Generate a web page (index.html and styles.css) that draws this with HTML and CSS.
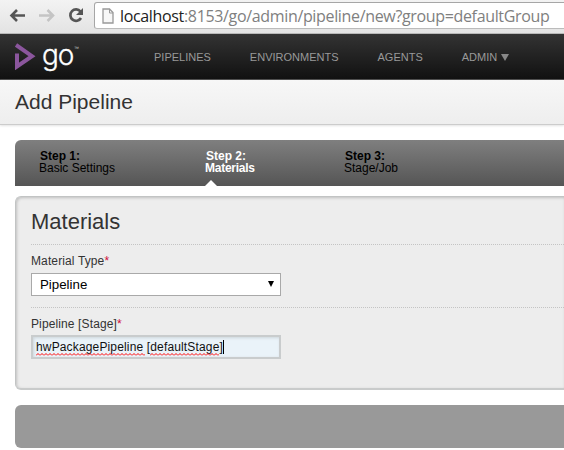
FILE: index.html
```
<!DOCTYPE html>
<html lang="en">
<head>
<meta charset="utf-8">
<title>Add Pipeline</title>
<link rel="stylesheet" href="styles.css">
</head>
<body>
<div class="toolbar">
  <svg class="controls" width="94" height="33" viewBox="0 0 94 33" fill="none">
    <path d="M25 15.500H12M17 10l-5.500 5.500 5.500 5.500" stroke="#555" stroke-width="2.600"/>
    <path d="M39 15.500H52M47.500 10l5.500 5.500-5.500 5.500" stroke="#c4c4c4" stroke-width="2.600"/>
    <path d="M80.500 11.500A5.700 5.700 0 1 0 81 18" stroke="#555" stroke-width="2.700"/>
    <path d="M83 8v7h-7z" fill="#555"/>
  </svg>
  <div class="address">
    <svg width="12" height="16" viewBox="0 0 12 16"><path d="M1 1h6.500L11 4.500V15H1z" fill="#f7f7f7" stroke="#999" stroke-width="1.300"/><path d="M7.500 1v4H11" fill="none" stroke="#999"/></svg>
    <span class="url"><b>localhost</b>:8153/go/admin/pipeline/new?group=defaultGroup</span>
  </div>
</div>
<header class="header">
  <svg class="mark" width="21" height="27" viewBox="0 0 21 27" fill="none" stroke="#8b569d" stroke-width="4"><path d="M1 2L17 13.200 2 23.500V10.500"/></svg>
  <span class="brand">go</span><span class="tm">™</span>
  <nav class="nav">
    <a>PIPELINES</a><a>ENVIRONMENTS</a><a>AGENTS</a><a>ADMIN<i class="caret"></i></a>
  </nav>
</header>
<div class="title"><h1>Add Pipeline</h1></div>
<main>
  <ol class="steps">
    <li class="s1"><b>Step 1:</b><span>Basic Settings</span></li>
    <li class="s2 current"><b>Step 2:</b><span>Materials</span></li>
    <li class="s3"><b>Step 3:</b><span>Stage/Job</span></li>
  </ol>
  <section class="panel">
    <h2>Materials</h2>
    <div class="row first">
      <label>Material Type<em>*</em></label>
      <div class="select"><span>Pipeline</span><svg width="6" height="6" viewBox="0 0 6 6"><path d="M0 0h6L3 6z"/></svg></div>
    </div>
    <div class="row">
      <label>Pipeline [Stage]<em>*</em></label>
      <div class="input"><span class="misspelt">hwPackagePipeline<svg height="3" width="109"><defs><pattern id="wave" width="4" height="3" patternUnits="userSpaceOnUse"><path d="M0 2.500L2 .5L4 2.500" fill="none" stroke="#f00" stroke-width="1"/></pattern></defs><rect width="109" height="3" fill="url(#wave)"/></svg></span>&nbsp;[<span class="misspelt">defaultStage<svg height="3" width="69"><rect width="69" height="3" fill="url(#wave)"/></svg></span>]<i class="cursor"></i></div>
    </div>
  </section>
  <div class="actions"></div>
</main>
</body>
</html>
```
FILE: styles.css
```
* { box-sizing: border-box; }
body { margin: 0; width: 564px; height: 450px; overflow: hidden; background: #fff; color: #333; font: 12px "Liberation Sans", Arial, sans-serif; }
.toolbar { height: 34px; display: flex; background: linear-gradient(#f3f3f3, #e3e3e3); border-bottom: 1px solid #b8b8b8; overflow: hidden; }
.controls { flex: none; }
.address { flex: none; width: 480px; height: 27px; margin-top: 2px; display: flex; align-items: center; padding-left: 7px; background: #fff; border: 1px solid #a6a6a6; border-bottom-color: #bbb; border-radius: 3px; white-space: nowrap; }
.address svg { flex: none; }
.url { margin-left: 6px; font: 16px/24px "Open Sans", sans-serif; letter-spacing: -.34px; color: #808080; }
.url b { font-weight: 400; color: #222; }
.header { height: 46px; display: flex; background: linear-gradient(#333, #111); border-bottom: 1px solid #444; white-space: nowrap; }
.mark { margin: 9px 0 0 15px; flex: none; }
.brand { width: 33px; margin: 3px 0 0 6px; font: 300 28px/36px Inter, sans-serif; letter-spacing: -1px; color: #fff; -webkit-text-stroke: .3px #fff; }
.tm { width: 6px; margin: 11px 0 0 -1px; font-size: 5px; line-height: 6px; color: #ccc; }
.nav { display: flex; margin-left: 74px; font-size: 11px; line-height: 47px; color: #999; gap: 39px; }
.nav a { display: flex; align-items: center; padding-top: 1px; }
.caret { margin-left: 4px; border: 4px solid transparent; border-top: 7px solid #888; border-bottom: 0; }
.title { height: 45px; padding: 9px 15px; background: linear-gradient(#f7f7f7, #eee); border-bottom: 1px solid #ccc; box-shadow: 0 1px 2px #e4e4e4; }
h1 { margin: 0; font-size: 21px; line-height: 26px; font-weight: 400; }
main { padding: 15px 0 0 15px; }
.steps { margin: 0; padding: 9px 0 0 24px; height: 46px; display: flex; list-style: none; background: linear-gradient(#7f7f7f, #555); border-radius: 6px 0 0 0; color: #000; line-height: 12px; }
.steps li { position: relative; }
.steps b, .steps span { display: block; line-height: 12px; }
.steps b { padding: 1px 0 0 1px; }
.s1 { width: 166px; }
.s2 { width: 139px; }
.current { color: #fff; }
.current span { font-weight: 700; letter-spacing: -.25px; }
.current::after { content: ""; position: absolute; left: 0; bottom: 0; border: 6px solid transparent; border-bottom-color: #fff; border-top: 0; }
.panel { height: 194px; margin-top: 10px; padding: 10px 0 0 15px; background: #ededed; border: 1px solid #c2c4c4; border-bottom: 2px solid #c9cbcb; border-right: 0; border-radius: 6px 0 0 6px; box-shadow: inset 1px 1px 3px #c0c0c0; }
h2 { margin: 0; height: 37px; font-size: 22px; line-height: 30px; font-weight: 400; }
.row { border-top: 1px dotted #c4c4c4; padding-top: 9px; height: 63px; }
.row label { display: block; line-height: 14px; letter-spacing: .12px; }
em { color: #d0103a; font-style: normal; }
.select { width: 250px; height: 23px; margin-top: 5px; display: flex; align-items: center; justify-content: space-between; padding: 0 6px 0 8px; background: #fff; border: 1px solid #a9a9a9; font-size: 13.300px; color: #000; }
.select svg { margin-top: -1px; }
.input { width: 250px; height: 24px; margin-top: 4px; display: flex; align-items: center; padding-left: 3px; border: 2px solid #c9cccd; background: #eaf3f9; box-shadow: inset 1px 1px 3px #cdd5da; color: #111; line-height: 20px; letter-spacing: .15px; }
.misspelt { position: relative; }
.misspelt svg { position: absolute; left: 0; bottom: 1px; }
.cursor { width: 1px; height: 14px; background: #000; }
.actions { height: 43px; margin-top: 15px; background: #999; border-radius: 6px 0 0 6px; }
```
